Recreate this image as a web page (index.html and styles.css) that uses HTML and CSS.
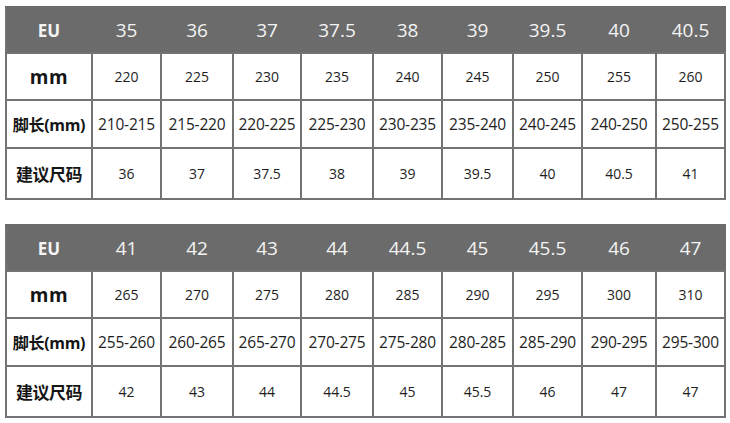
FILE: index.html
```html
<!DOCTYPE html>
<html lang="zh">
<head>
<meta charset="utf-8">
<link rel="stylesheet" href="styles.css">
</head>
<body>
<div class="page">
<table class="size">
<colgroup>
<col class="c0"><col class="c1"><col class="c2"><col class="c3"><col class="c4"><col class="c5"><col class="c6"><col class="c7"><col class="c8"><col class="c9">
</colgroup>
<tr class="head r-h"><th class="eu">EU</th><th>35</th><th>36</th><th>37</th><th>37.5</th><th>38</th><th>39</th><th>39.5</th><th>40</th><th>40.5</th></tr>
<tr class="r-mm"><th class="lab mm">mm</th><td>220</td><td>225</td><td>230</td><td>235</td><td>240</td><td>245</td><td>250</td><td>255</td><td>260</td></tr>
<tr class="r-ft"><th class="lab">脚长(mm)</th><td class="rng">210-215</td><td class="rng">215-220</td><td class="rng">220-225</td><td class="rng">225-230</td><td class="rng">230-235</td><td class="rng">235-240</td><td class="rng">240-245</td><td class="rng">240-250</td><td class="rng">250-255</td></tr>
<tr class="r-sg"><th class="lab sg">建议尺码</th><td>36</td><td>37</td><td>37.5</td><td>38</td><td>39</td><td>39.5</td><td>40</td><td>40.5</td><td>41</td></tr>
</table>

<table class="size">
<colgroup>
<col class="c0"><col class="c1"><col class="c2"><col class="c3"><col class="c4"><col class="c5"><col class="c6"><col class="c7"><col class="c8"><col class="c9">
</colgroup>
<tr class="head r-h"><th class="eu">EU</th><th>41</th><th>42</th><th>43</th><th>44</th><th>44.5</th><th>45</th><th>45.5</th><th>46</th><th>47</th></tr>
<tr class="r-mm"><th class="lab mm">mm</th><td>265</td><td>270</td><td>275</td><td>280</td><td>285</td><td>290</td><td>295</td><td>300</td><td>310</td></tr>
<tr class="r-ft"><th class="lab">脚长(mm)</th><td class="rng">255-260</td><td class="rng">260-265</td><td class="rng">265-270</td><td class="rng">270-275</td><td class="rng">275-280</td><td class="rng">280-285</td><td class="rng">285-290</td><td class="rng">290-295</td><td class="rng">295-300</td></tr>
<tr class="r-sg"><th class="lab sg">建议尺码</th><td>42</td><td>43</td><td>44</td><td>44.5</td><td>45</td><td>45.5</td><td>46</td><td>47</td><td>47</td></tr>
</table>
</div>
</body>
</html>
```
FILE: styles.css
```css
html, body {
  margin: 0;
  padding: 0;
  background: #ffffff;
}
.page {
  padding: 6px 0 0 5px;
  display: flex;
  flex-direction: column;
  gap: 24px;
  font-family: "Open Sans", "Noto Sans CJK SC", sans-serif;
}
.size {
  border-collapse: collapse;
  table-layout: fixed;
  width: 721px;
  border: 2px solid #737373;
}
.c0 { width: 86px; }
.c1 { width: 69px; }
.c2 { width: 72px; }
.c3 { width: 68px; }
.c4 { width: 72px; }
.c5 { width: 69px; }
.c6 { width: 71px; }
.c7 { width: 69px; }
.c8 { width: 74px; }
.c9 { width: 69px; }
.size td, .size th {
  border: 2px solid #737373;
  text-align: center;
  vertical-align: middle;
  padding: 0;
  color: #1e1e1e;
  font-size: 14px;
  font-weight: 400;
  white-space: nowrap;
}
.size td.rng {
  font-size: 15.5px;
  letter-spacing: -0.2px;
}
.head th {
  background: #6b6b6b;
  color: #f4f4f4;
  font-size: 19px;
  border-left-color: #6b6b6b;
  border-right-color: #6b6b6b;
  border-top-color: #6b6b6b;
}
.head th.eu {
  font-size: 17px;
  font-weight: 700;
  border-left-color: #737373;
}
.size th.lab {
  font-weight: 700;
  font-size: 16px;
  color: #151515;
  letter-spacing: -0.3px;
}
.size th.sg {
  font-size: 17px;
  letter-spacing: -0.5px;
}
.size th.mm {
  font-size: 19px;
  letter-spacing: 0.5px;
}
.r-h { height: 46px; }
.r-mm { height: 47px; }
.r-ft { height: 48px; }
.r-sg { height: 51px; }
```
